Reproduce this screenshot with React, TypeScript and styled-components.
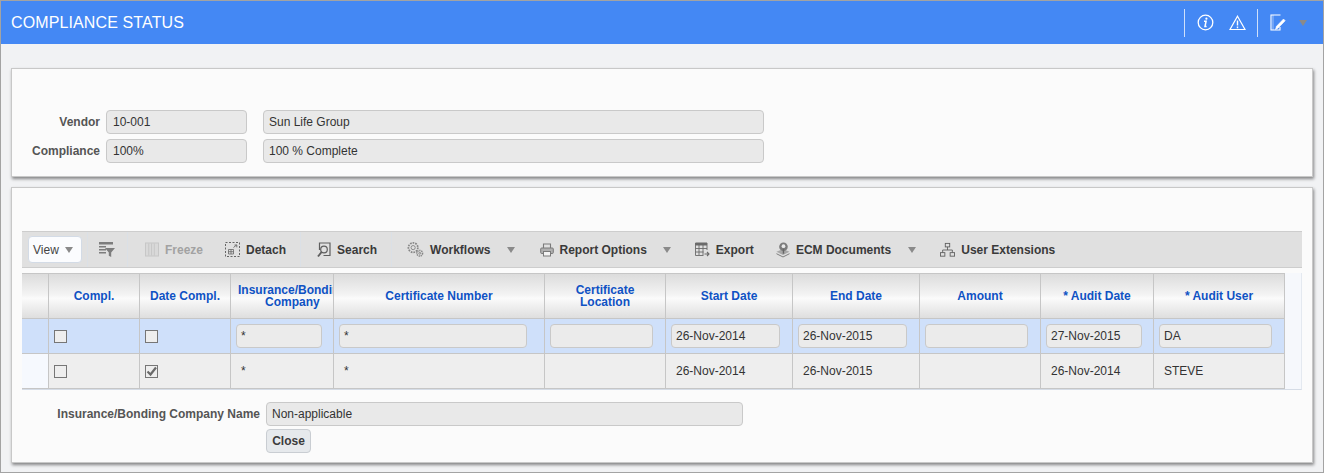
import styled, { createGlobalStyle } from 'styled-components';

const GlobalStyle = createGlobalStyle`
  html, body {
    margin: 0;
    padding: 0;
    background: #f1f2f4;
  }
  * {
    box-sizing: border-box;
  }
`;

const Page = styled.div`
  width: 1324px;
  height: 473px;
  overflow: hidden;
  border: 1px solid #a3a3a3;
  background: #f1f2f4;
  font-family: "Liberation Sans", Arial, sans-serif;
  font-size: 12px;
  color: #333;
`;

const Header = styled.header`
  height: 43px;
  background: #4488f4;
  display: flex;
  align-items: center;
  padding: 0 16px 0 10px;
`;

const Title = styled.h1`
  flex: 1;
  margin: 0;
  font-size: 16px;
  font-weight: 400;
  letter-spacing: 0.12px;
  color: #fff;
`;

const HeaderTools = styled.div`
  display: flex;
  align-items: center;
`;

const HeaderSep = styled.span`
  width: 1px;
  height: 28px;
  background: #cfe0fb;
`;

const HeaderIcon = styled.span<{ $left: number; $right: number }>`
  display: flex;
  margin: 0 ${p => p.$right}px 0 ${p => p.$left}px;
`;

const Panel = styled.section`
  margin: 0 10px 0 10px;
  background: #fbfbfb;
  border: 1px solid #c8c8c8;
  box-shadow: 1px 2px 3px rgba(0, 0, 0, 0.45);
`;

const VendorPanel = styled(Panel)`
  height: 109px;
  margin-top: 24px;
  padding-top: 41px;
  display: flex;
  flex-direction: column;
  gap: 5px;
`;

const FormRow = styled.div`
  display: flex;
  align-items: center;
`;

const Label = styled.label<{ $width: number }>`
  width: ${p => p.$width}px;
  padding-right: 6px;
  text-align: right;
  font-weight: 700;
  color: #555;
`;

const Field = styled.div<{ $width: number; $left?: number }>`
  width: ${p => p.$width}px;
  height: 24px;
  margin-left: ${p => p.$left ?? 0}px;
  padding: 0 6px;
  display: flex;
  align-items: center;
  background: #e9e9e9;
  border: 1px solid #c9c9c9;
  border-radius: 4px;
  color: #333;
  white-space: nowrap;
`;

const WideField = styled(Field)`
  padding: 0 5px;
`;

const GridPanel = styled(Panel)`
  height: 276px;
  margin-top: 10px;
  padding: 43px 10px 0 10px;
`;

const Toolbar = styled.div`
  height: 37px;
  display: flex;
  align-items: center;
  background: #e0e0e0;
  border-top: 1px solid #cdcdcd;
  border-bottom: 1px solid #cdcdcd;
  padding-left: 6px;
`;

const ViewSelect = styled.div`
  width: 54px;
  height: 27px;
  display: flex;
  align-items: center;
  gap: 6px;
  padding: 0 0 0 4px;
  background: #fbfcfe;
  border: 1px solid #d3dbe6;
  border-radius: 4px;
  color: #444;
`;

const Caret = styled.span<{ $left?: number }>`
  width: 0;
  height: 0;
  flex: none;
  margin-left: ${p => p.$left ?? 0}px;
  border-left: 4.5px solid transparent;
  border-right: 4.5px solid transparent;
  border-top: 6px solid #8a8a8a;
`;

const ToolSep = styled.span<{ $left: number }>`
  width: 1px;
  height: 35px;
  flex: none;
  margin-left: ${p => p.$left}px;
  background: #dbe0e6;
`;

const ToolButton = styled.button<{ $left: number; $disabled?: boolean }>`
  display: flex;
  align-items: center;
  gap: 6px;
  flex: none;
  margin-left: ${p => p.$left}px;
  padding: 0;
  border: 0;
  background: none;
  font: 700 12px "Liberation Sans", Arial, sans-serif;
  color: ${p => (p.$disabled ? '#a2a2a2' : '#3a3a3a')};
`;

const Table = styled.div`
  margin-top: 5px;
  width: 1280px;
  background: #f6f8fc;
  border-bottom: 1px solid #d5dce6;
  border-right: 1px solid #e4e9f0;
`;

const Row = styled.div<{ $height: number }>`
  display: grid;
  grid-template-columns: 27px 91px 91px 103px 211px 121px 127px 127px 121px 113px 131px;
  width: 1263px;
  height: ${p => p.$height}px;
`;

const HeadCell = styled.div<{ $clip?: boolean }>`
  display: flex;
  align-items: center;
  justify-content: ${p => (p.$clip ? 'flex-start' : 'center')};
  overflow: hidden;
  padding-left: ${p => (p.$clip ? 7 : 0)}px;
  text-align: center;
  line-height: 12px;
  font-weight: 700;
  color: #0f52c4;
  white-space: pre;
  background: linear-gradient(#dcdcdc 0%, #f4f4f4 48%, #fbfbfb 55%, #dedede 100%);
  border-top: 1px solid #c6c6c6;
  border-right: 1px solid #c6c6c6;
  border-bottom: 1px solid #c6c6c6;
`;

const Cell = styled.div<{ $bg: string }>`
  display: flex;
  align-items: center;
  padding: 0 5px;
  background: ${p => p.$bg};
  border-right: 1px solid #c6c6c6;
  border-bottom: 1px solid #c6c6c6;
  color: #333;
`;

const CellText = styled.span`
  padding-left: 5px;
`;

const CellInput = styled.div<{ $width: number }>`
  width: ${p => p.$width}px;
  height: 24px;
  padding: 0 4px;
  display: flex;
  align-items: center;
  flex: none;
  background: #ebebeb;
  border: 1px solid #c9c9c9;
  border-radius: 4px;
  white-space: nowrap;
`;

const CheckBox = styled.span`
  width: 13px;
  height: 13px;
  display: flex;
  background: #eeeeee;
  border: 1px solid #767676;
`;

const Footer = styled.div`
  margin-top: 12px;
  display: grid;
  grid-template-columns: 244px auto;
  justify-content: start;
  row-gap: 3px;
  align-items: center;
`;

const CloseButton = styled.button`
  grid-column: 2;
  width: 45px;
  height: 24px;
  padding: 0;
  background: #e6e9ec;
  border: 1px solid #c9cdd2;
  border-radius: 4px;
  font: 700 12px "Liberation Sans", Arial, sans-serif;
  color: #3c3c3c;
`;

const columns = [
  '',
  'Compl.',
  'Date Compl.',
  'Insurance/Bonding\nCompany',
  'Certificate Number',
  'Certificate\nLocation',
  'Start Date',
  'End Date',
  'Amount',
  '* Audit Date',
  '* Audit User',
];

const editRow = [
  { value: '*', width: 86 },
  { value: '*', width: 188 },
  { value: '', width: 103 },
  { value: '26-Nov-2014', width: 109 },
  { value: '26-Nov-2015', width: 109 },
  { value: '', width: 103 },
  { value: '27-Nov-2015', width: 96 },
  { value: 'DA', width: 113 },
];

const plainRow = ['*', '*', '', '26-Nov-2014', '26-Nov-2015', '', '26-Nov-2014', 'STEVE'];

const InfoIcon = () => (
  <svg width="17" height="17" viewBox="0 0 17 17" fill="none" stroke="#fff">
    <circle cx="8.5" cy="8.5" r="7.3" strokeWidth="1.3" />
    <path d="M7 7.2h2.1L8 12.4h1.6" strokeWidth="1.5" />
    <circle cx="9.4" cy="4.7" r="1.1" fill="#fff" stroke="none" />
  </svg>
);

const WarnIcon = () => (
  <svg width="17" height="16" viewBox="0 0 17 16" fill="none" stroke="#fff">
    <path d="M8.5 1.2 16 14.5H1z" strokeWidth="1.2" />
    <path d="M8.5 5.5v5M8.5 11.6v1.6" strokeWidth="1.4" />
  </svg>
);

const EditIcon = () => (
  <svg width="16" height="17" viewBox="0 0 16 17" fill="none" stroke="#fff">
    <path d="M10.5 1H1v15h9V13" strokeWidth="1.1" />
    <path d="M3 1v15" strokeWidth="0.8" opacity="0.6" />
    <path d="M5.5 15.5l1-3.2 7-7.3 1.7 1.7-7 7.3z" fill="#fff" strokeWidth="0.6" />
  </svg>
);

const FilterIcon = () => (
  <svg width="16" height="17" viewBox="0 0 16 17" fill="none">
    <path d="M0 1h14v2.5H0zM0 5h7v1.5H0zM0 8h7v1.5H0zM0 11h7v1.5H0z" fill="#7d7d7d" />
    <path d="M6 7h10l-3.8 4.6V16l-2.4-1.3v-3.1z" fill="#7d7d7d" />
  </svg>
);

const FreezeIcon = () => (
  <svg width="14" height="15" viewBox="0 0 15 15" fill="#d9d9d9" stroke="#c6c6c6">
    <rect x="0.5" y="0.5" width="14" height="14" />
    <path d="M4 1v13M7 1v13M10 1v13" />
  </svg>
);

const DetachIcon = () => (
  <svg width="15" height="15" viewBox="0 0 15 15" fill="none" stroke="#666">
    <rect x="0.5" y="0.5" width="14" height="14" strokeDasharray="2 1.5" />
    <path d="M3.5 7.5h5v4.5h-5zM3.5 9.7h5M6 7.5V12" strokeWidth="0.8" />
    <path d="M8.5 5.5l3-2.5M9.5 3h2.3v2.3" strokeWidth="0.9" />
  </svg>
);

const SearchIcon = () => (
  <svg width="14" height="16" viewBox="0 0 14 16" fill="none" stroke="#5e5e5e">
    <path d="M2.5 8V1h10.5v12.5H6.5" strokeWidth="1.2" />
    <circle cx="7" cy="7.5" r="3.3" strokeWidth="1.2" />
    <path d="M4.6 10 1 14.5" strokeWidth="1.9" />
  </svg>
);

const WorkflowIcon = () => (
  <svg width="17" height="17" viewBox="0 0 18 17" fill="none" stroke="#868686">
    <circle cx="6.5" cy="6.5" r="5" strokeWidth="1.8" strokeDasharray="1.8 1" />
    <circle cx="6.5" cy="6.5" r="2.2" />
    <circle cx="13.5" cy="12.5" r="3" strokeWidth="1.6" strokeDasharray="1.4 0.8" />
    <circle cx="13.5" cy="12.5" r="1" />
  </svg>
);

const PrintIcon = () => (
  <svg width="14" height="14" viewBox="0 0 14 14" fill="none" stroke="#7a7a7a">
    <path d="M3.5 5V1h7v4" strokeWidth="1.1" />
    <rect x="0.7" y="5" width="12.6" height="5.5" rx="1" fill="#b0b0b0" />
    <rect x="3.5" y="8.5" width="7" height="4.5" fill="#f2f2f2" />
  </svg>
);

const ExportIcon = () => (
  <svg width="15" height="15" viewBox="0 0 15 15" fill="none" stroke="#6a6a6a">
    <path d="M.5 1h11.5v2H.5z" fill="#6a6a6a" />
    <path d="M.5 3v10.5h8M12 3v5M4 3v10M8 3v10M.5 6.5H12M.5 10h8" strokeWidth="0.9" />
    <path d="M9.5 12h4M12 10l2 2-2 2" strokeWidth="1.1" />
  </svg>
);

const EcmIcon = () => (
  <svg width="14" height="17" viewBox="0 0 15 17" fill="none">
    <path d="M0.5 11 7.5 8l7 3-7 3.5z" fill="#a8a8a8" />
    <path d="M0.5 13 7.5 16.5 14.5 13" stroke="#777" />
    <circle cx="8" cy="5.5" r="4.6" fill="#7b7b7b" />
    <circle cx="8" cy="5" r="2" fill="#e8e8e8" />
    <path d="M8 8v5" stroke="#666" strokeWidth="1.5" />
  </svg>
);

const ExtensionsIcon = () => (
  <svg width="15" height="16" viewBox="0 0 17 16" fill="none" stroke="#5e5e5e">
    <rect x="6" y="0.5" width="5" height="4" />
    <rect x="0.5" y="11" width="5" height="4" />
    <rect x="11.5" y="11" width="5" height="4" />
    <path d="M8.5 4.5V8M3 11V8h11v3" />
  </svg>
);

const Check = () => (
  <svg width="11" height="11" viewBox="0 0 11 11" fill="none" stroke="#6a6a6a" strokeWidth="2.2">
    <path d="M1.5 5.5 4.5 8.5 10 1.5" />
  </svg>
);

const App = () => (
  <Page>
    <GlobalStyle />
    <Header>
      <Title>COMPLIANCE STATUS</Title>
      <HeaderTools>
        <HeaderSep />
        <HeaderIcon $left={12} $right={7}>
          <InfoIcon />
        </HeaderIcon>
        <HeaderIcon $left={8} $right={11}>
          <WarnIcon />
        </HeaderIcon>
        <HeaderSep />
        <HeaderIcon $left={12} $right={13}>
          <EditIcon />
        </HeaderIcon>
        <Caret />
      </HeaderTools>
    </Header>

    <VendorPanel>
      <FormRow>
        <Label $width={94}>Vendor</Label>
        <Field $width={141}>10-001</Field>
        <WideField $width={501} $left={16}>Sun Life Group</WideField>
      </FormRow>
      <FormRow>
        <Label $width={94}>Compliance</Label>
        <Field $width={141}>100%</Field>
        <WideField $width={501} $left={16}>100 % Complete</WideField>
      </FormRow>
    </VendorPanel>

    <GridPanel>
      <Toolbar>
        <ViewSelect>
          View <Caret />
        </ViewSelect>
        <ToolSep $left={5} />
        <ToolButton $left={11}><FilterIcon /></ToolButton>
        <ToolSep $left={12} />
        <ToolButton $left={17} $disabled><FreezeIcon />Freeze</ToolButton>
        <ToolButton $left={22}><DetachIcon />Detach</ToolButton>
        <ToolSep $left={14} />
        <ToolButton $left={16}><SearchIcon />Search</ToolButton>
        <ToolSep $left={14} />
        <ToolButton $left={15}><WorkflowIcon />Workflows</ToolButton>
        <Caret $left={16} />
        <ToolButton $left={25}><PrintIcon />Report Options</ToolButton>
        <Caret $left={16} />
        <ToolButton $left={24}><ExportIcon />Export</ToolButton>
        <ToolButton $left={22}><EcmIcon />ECM Documents</ToolButton>
        <Caret $left={17} />
        <ToolButton $left={24}><ExtensionsIcon />User Extensions</ToolButton>
      </Toolbar>

      <Table>
        <Row $height={46}>
          {columns.map(col => (
            <HeadCell key={col} $clip={col.startsWith('Insurance')}>{col}</HeadCell>
          ))}
        </Row>
        <Row $height={35}>
          <Cell $bg="#cfe0fa" />
          <Cell $bg="#cfe0fa"><CheckBox /></Cell>
          <Cell $bg="#cfe0fa"><CheckBox /></Cell>
          {editRow.map((input, i) => (
            <Cell $bg="#cfe0fa" key={i}>
              <CellInput $width={input.width}>{input.value}</CellInput>
            </Cell>
          ))}
        </Row>
        <Row $height={35}>
          <Cell $bg="#f6f9fe" />
          <Cell $bg="#eeeeee"><CheckBox /></Cell>
          <Cell $bg="#eeeeee"><CheckBox><Check /></CheckBox></Cell>
          {plainRow.map((value, i) => (
            <Cell $bg="#eeeeee" key={i}>
              <CellText>{value}</CellText>
            </Cell>
          ))}
        </Row>
      </Table>

      <Footer>
        <Label $width={244}>Insurance/Bonding Company Name</Label>
        <WideField $width={477}>Non-applicable</WideField>
        <CloseButton>Close</CloseButton>
      </Footer>
    </GridPanel>
  </Page>
);

export default App;
